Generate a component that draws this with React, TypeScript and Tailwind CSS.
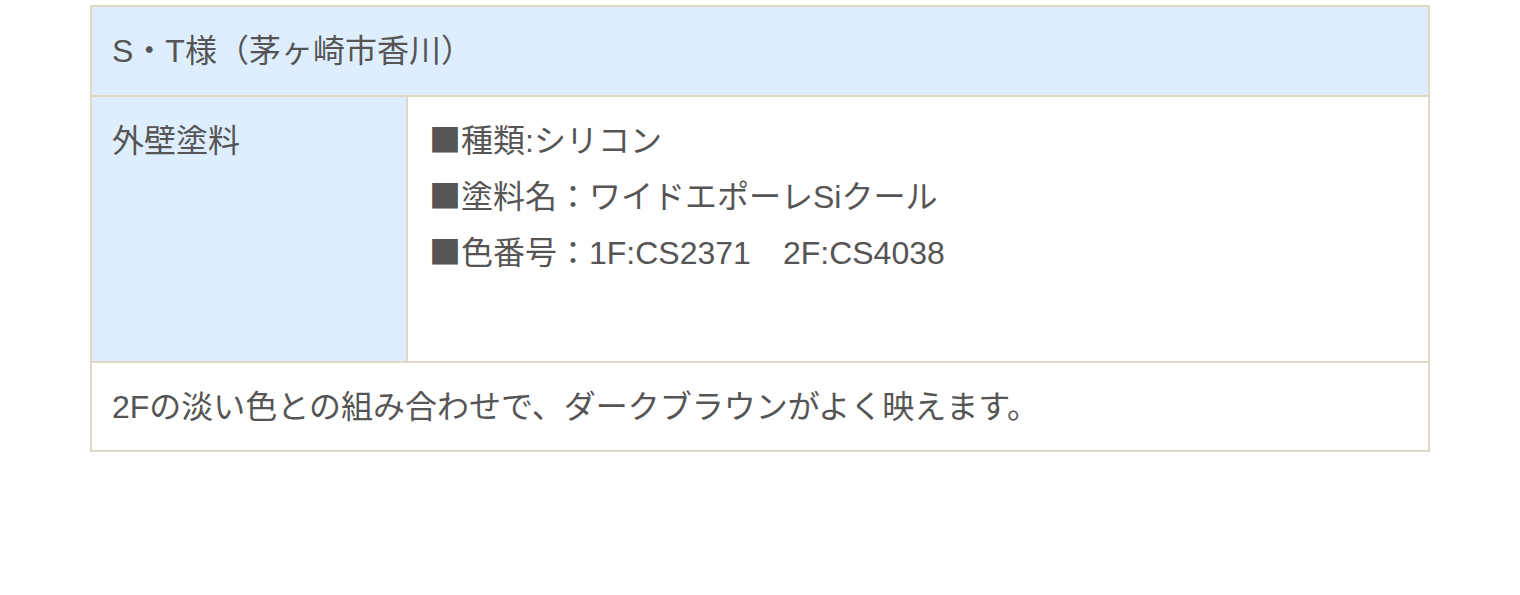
const Sq = () => <span className="[font-family:'Noto_Sans_CJK_JP',sans-serif]">■</span>;

export default function App() {
  const specs = ['種類:シリコン', '塗料名：ワイドエポーレSiクール', '色番号：1F:CS2371　2F:CS4038'];

  return (
    <div className="min-h-[595px] bg-white pt-[5px] pl-[90px] text-[#555] [font-family:'Liberation_Sans','Noto_Sans_CJK_JP',sans-serif]">
      <div className="w-[1340px] border-2 border-[#e0d8c6] text-[32px] leading-[56px]">
        <div className="h-[88px] bg-[#dfeefe] px-[20px] pt-[16px]">
          <div className="h-[56px]">S・T様（茅ヶ崎市香川）</div>
        </div>
        <div className="flex h-[266px] border-t-2 border-[#e0d8c6]">
          <div className="w-[314px] shrink-0 bg-[#dfeefe] px-[20px] pt-[16px]">
            <div className="h-[56px]">外壁塗料</div>
          </div>
          <div className="flex-1 border-l-2 border-[#e0d8c6] px-[21px] pt-[13px]">
            {specs.map((s) => (
              <div key={s} className="h-[56px]">
                <Sq />
                {s}
              </div>
            ))}
          </div>
        </div>
        <div className="h-[89px] border-t-2 border-[#e0d8c6] px-[20px] pt-[16px]">
          <div className="h-[56px]">2Fの淡い色との組み合わせで、ダークブラウンがよく映えます。</div>
        </div>
      </div>
    </div>
  );
}
